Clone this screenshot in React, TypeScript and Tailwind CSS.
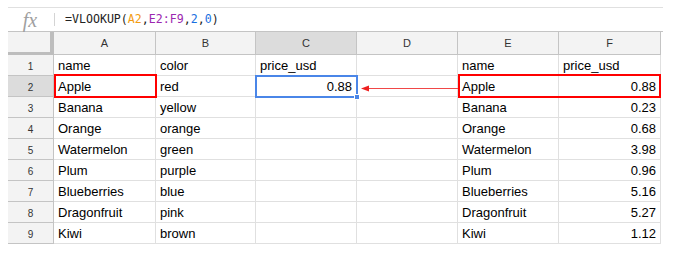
import React from "react";

const widths = [46, 102, 100, 101, 101, 101, 102];
const letters = ["A", "B", "C", "D", "E", "F"];

type Cell = { t: string; right?: boolean };

const rows: Cell[][] = [
  [{ t: "name" }, { t: "color" }, { t: "price_usd" }, { t: "" }, { t: "name" }, { t: "price_usd" }],
  [{ t: "Apple" }, { t: "red" }, { t: "0.88", right: true }, { t: "" }, { t: "Apple" }, { t: "0.88", right: true }],
  [{ t: "Banana" }, { t: "yellow" }, { t: "" }, { t: "" }, { t: "Banana" }, { t: "0.23", right: true }],
  [{ t: "Orange" }, { t: "orange" }, { t: "" }, { t: "" }, { t: "Orange" }, { t: "0.68", right: true }],
  [{ t: "Watermelon" }, { t: "green" }, { t: "" }, { t: "" }, { t: "Watermelon" }, { t: "3.98", right: true }],
  [{ t: "Plum" }, { t: "purple" }, { t: "" }, { t: "" }, { t: "Plum" }, { t: "0.96", right: true }],
  [{ t: "Blueberries" }, { t: "blue" }, { t: "" }, { t: "" }, { t: "Blueberries" }, { t: "5.16", right: true }],
  [{ t: "Dragonfruit" }, { t: "pink" }, { t: "" }, { t: "" }, { t: "Dragonfruit" }, { t: "5.27", right: true }],
  [{ t: "Kiwi" }, { t: "brown" }, { t: "" }, { t: "" }, { t: "Kiwi" }, { t: "1.12", right: true }],
];

export default function App() {
  return (
    <div
      className="relative w-[673px] h-[253px] bg-white overflow-hidden"
      style={{ fontFamily: '"Liberation Sans", Arial, sans-serif' }}
    >
      <div className="ml-[8px] pt-[7px] w-[655px]">
        {/* formula bar */}
        <div className="h-[24px] border-t border-[#e0e0e0] flex items-center">
          <div className="w-[46px] h-full flex items-center justify-center">
            <span
              className="text-[20px] italic text-[#a0a0a0] leading-none pr-[2px]"
              style={{ fontFamily: '"Liberation Serif", "Times New Roman", serif' }}
            >
              fx
            </span>
          </div>
          <div className="w-px h-[13px] bg-[#d4d4d4]" />
          <div
            className="ml-[10px] text-[11.6px] text-[#222] leading-none pt-[1px]"
            style={{ fontFamily: '"DejaVu Sans Mono", "Liberation Mono", monospace' }}
          >
            =VLOOKUP(<span className="text-[#f39c12]">A2</span>,
            <span className="text-[#9c27b0]">E2:F9</span>,<span className="text-[#1a6fe0]">2</span>,
            <span className="text-[#1a6fe0]">0</span>)
          </div>
        </div>

        {/* column header row */}
        <div className="flex h-[24px] border-t border-[#c4c4c4]">
          <div
            className="h-full bg-[#f3f3f3] border-r-[4px] border-b-[3px] border-[#bdbdbd]"
            style={{ width: widths[0] }}
          />
          {letters.map((l, i) => (
            <div
              key={l}
              className={`h-full flex items-center justify-center border-r border-b border-[#c4c4c4] text-[11px] text-[#333] ${
                l === "C" ? "bg-[#dcdcdc]" : "bg-[#f3f3f3]"
              }`}
              style={{ width: widths[i + 1] }}
            >
              {l}
            </div>
          ))}
        </div>

        {/* data rows */}
        {rows.map((r, ri) => (
          <div key={ri} className="flex h-[21px]">
            <div
              className={`h-full flex items-center justify-center pt-[2px] border-r border-b border-[#c4c4c4] text-[10px] text-[#333] ${
                ri === 1 ? "bg-[#dcdcdc]" : "bg-[#f3f3f3]"
              }`}
              style={{ width: widths[0] }}
            >
              {ri + 1}
            </div>
            {r.map((c, ci) => (
              <div
                key={ci}
                className={`h-full flex items-end pb-[1px] px-[4px] border-r border-b border-[#e0e0e0] text-[13px] leading-[16px] text-black ${
                  c.right ? "justify-end" : "justify-start"
                }`}
                style={{ width: widths[ci + 1] }}
              >
                {c.t}
              </div>
            ))}
          </div>
        ))}
      </div>

      {/* overlays */}
      <div className="absolute left-[54px] top-[74px] w-[103px] h-[24px] border-2 border-[#ff0000]" />
      <div className="absolute left-[458px] top-[74px] w-[203px] h-[24px] border-2 border-[#ff0000]" />
      <div className="absolute left-[255px] top-[75px] w-[103px] h-[23px] border-2 border-[#4a86e8]" />
      <div className="absolute left-[354px] top-[94px] w-[6px] h-[6px] bg-[#4a86e8] border border-white" />
      <svg className="absolute left-0 top-0" width="673" height="253">
        <line x1="458" y1="88.5" x2="366" y2="88.5" stroke="#f04848" strokeWidth="1" />
        <polygon points="361,88.5 369,85.5 369,91.5" fill="#ee2020" />
      </svg>
    </div>
  );
}
